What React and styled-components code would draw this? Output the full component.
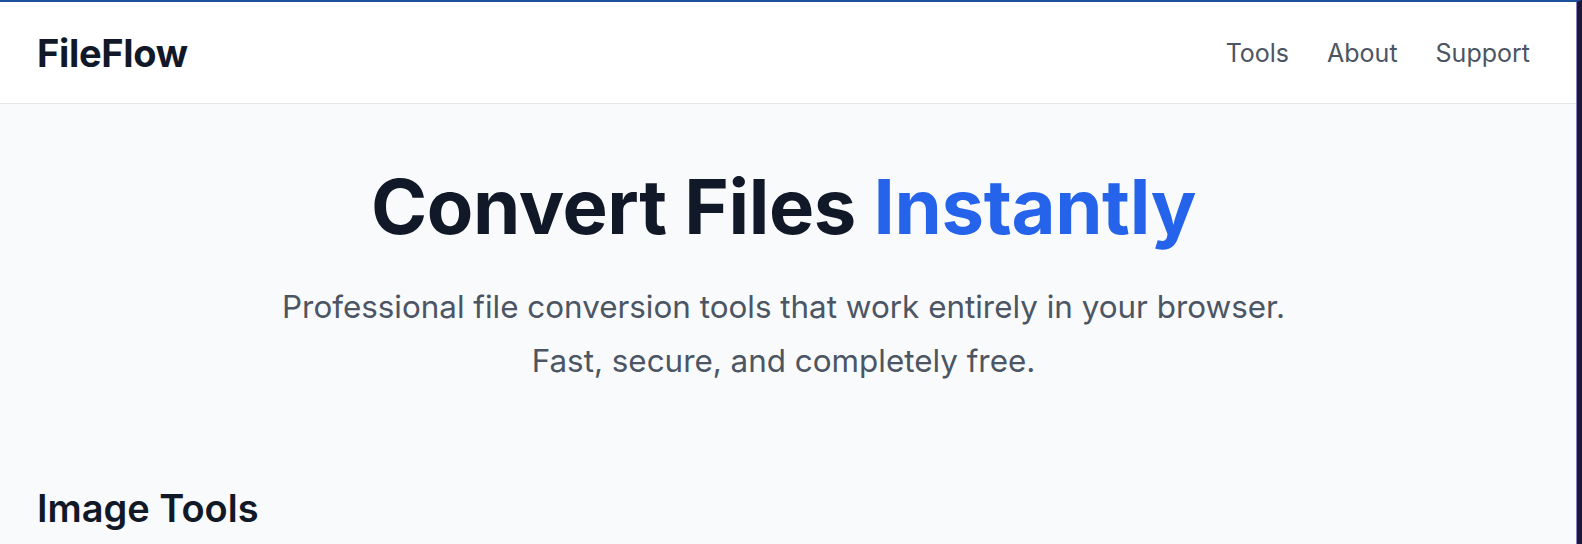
import React from 'react';
import styled, { createGlobalStyle } from 'styled-components';

const GlobalStyle = createGlobalStyle`
  html, body {
    margin: 0;
    padding: 0;
    background: #f9fafb;
  }
  body {
    font-family: Inter, "Noto Sans", "Liberation Sans", sans-serif;
    -webkit-font-smoothing: antialiased;
  }
`;

const Frame = styled.div`
  min-height: 544px;
  box-sizing: border-box;
  border-top: 2px solid #1c4f9c;
  border-right: 5px solid #1b1838;
  box-shadow: inset -1px 0 0 #8b82c6;
  background: #f9fafb;
  overflow: hidden;
`;

const Header = styled.header`
  display: flex;
  align-items: center;
  justify-content: space-between;
  height: 101px;
  padding: 0 46px 0 37px;
  background: #ffffff;
  border-bottom: 1px solid #e5e7eb;
  margin-right: 1px;
`;

const Logo = styled.div`
  font-size: 38px;
  font-weight: 700;
  letter-spacing: -0.3px;
  color: #111827;
`;

const Nav = styled.nav`
  display: flex;
  gap: 38px;
`;

const NavLink = styled.a`
  font-size: 25px;
  color: #4b5563;
  text-decoration: none;
  cursor: pointer;
`;

const Hero = styled.section`
  display: flex;
  flex-direction: column;
  align-items: center;
  padding: 60px 10px 0 0;
  text-align: center;
`;

const Title = styled.h1`
  margin: 0;
  font-size: 76px;
  font-weight: 700;
  line-height: 84px;
  letter-spacing: -0.4px;
  color: #111827;
`;

const Accent = styled.span`
  color: #2563eb;
`;

const Subtitle = styled.p`
  margin: 32px 0 0;
  font-size: 31.4px;
  line-height: 54px;
  color: #4b5563;
`;

const Section = styled.section`
  padding: 97px 37px 0;
`;

const SectionTitle = styled.h2`
  margin: 0;
  font-size: 38px;
  font-weight: 600;
  line-height: 46px;
  color: #111827;
`;

export default function App() {
  return (
    <Frame>
      <GlobalStyle />
      <Header>
        <Logo>FileFlow</Logo>
        <Nav>
          <NavLink>Tools</NavLink>
          <NavLink>About</NavLink>
          <NavLink>Support</NavLink>
        </Nav>
      </Header>
      <Hero>
        <Title>
          Convert Files <Accent>Instantly</Accent>
        </Title>
        <Subtitle>
          Professional file conversion tools that work entirely in your browser.
          <br />
          Fast, secure, and completely free.
        </Subtitle>
      </Hero>
      <Section>
        <SectionTitle>Image Tools</SectionTitle>
      </Section>
    </Frame>
  );
}
